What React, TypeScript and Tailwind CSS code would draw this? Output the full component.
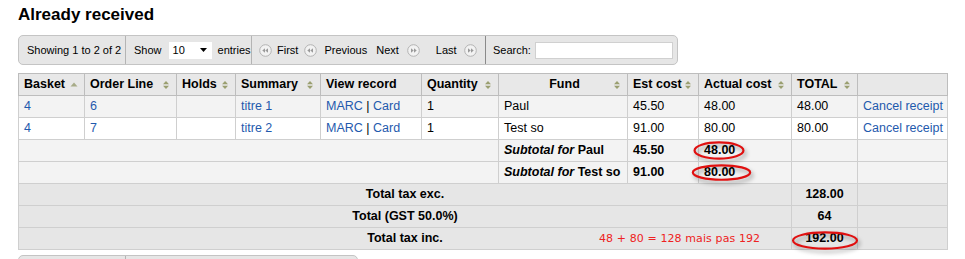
import React from "react";

const link = "text-[#1f5aad]";

function SortIcon({ up = false }: { up?: boolean }) {
  if (up) {
    return (
      <svg width="8" height="10" viewBox="0 0 8 10" className="absolute right-[6px] top-[6px]">
        <path d="M0.5 6.5 L4 2.5 L7.5 6.5 Z" fill="#a7ab88" />
      </svg>
    );
  }
  return (
    <svg width="8" height="10" viewBox="0 0 8 10" className="absolute right-[6px] top-[6px]">
      <path d="M1 4.3 L4 1 L7 4.3 Z" fill="#9a9f70" />
      <path d="M1 5.7 L4 9 L7 5.7 Z" fill="#9a9f70" />
    </svg>
  );
}

function PageIcon({ dir }: { dir: "prev" | "next" }) {
  return (
    <svg width="13" height="13" viewBox="0 0 13 13" className="block">
      <circle cx="6.5" cy="6.5" r="5.8" fill="#f2f2f2" stroke="#b3b3b3" strokeWidth="1" />
      {dir === "prev" ? (
        <g fill="#9a9a9a">
          <path d="M3.3 6.5 L6 4.2 L6 8.8 Z" />
          <path d="M6.3 6.5 L9 4.2 L9 8.8 Z" />
        </g>
      ) : (
        <g fill="#9a9a9a">
          <path d="M9.7 6.5 L7 4.2 L7 8.8 Z" />
          <path d="M6.7 6.5 L4 4.2 L4 8.8 Z" />
        </g>
      )}
    </svg>
  );
}

function Ellipse({ className }: { className: string }) {
  return (
    <svg
      className={"pointer-events-none absolute drop-shadow-[2px_3px_2px_rgba(0,0,0,0.35)] " + className}
      viewBox="0 0 100 40"
      preserveAspectRatio="none"
    >
      <ellipse cx="50" cy="20" rx="47" ry="17" fill="none" stroke="#e01010" strokeWidth="2.2" vectorEffect="non-scaling-stroke" />
    </svg>
  );
}

type Row = {
  basket: string;
  line: string;
  title: string;
  fund: string;
  est: string;
  actual: string;
  total: string;
};

const rows: Row[] = [
  { basket: "4", line: "6", title: "titre 1", fund: "Paul", est: "45.50", actual: "48.00", total: "48.00" },
  { basket: "4", line: "7", title: "titre 2", fund: "Test so", est: "91.00", actual: "80.00", total: "80.00" },
];

const th = "relative h-[22px] whitespace-nowrap border border-[#bdbdbd] pl-[5px] pr-[2px] py-0 text-left font-bold";
const td = "h-[22px] whitespace-nowrap border border-[#cfcfcf] px-[5px] py-0";

export default function App() {
  return (
    <div className="h-[259px] overflow-hidden bg-white pl-[18px] font-['Liberation_Sans',Arial,sans-serif] text-[12.5px] text-black">
      <h1 className="pt-[5px] text-[17px] font-bold leading-[20px]">Already received</h1>

      <div className="mt-[10px] flex h-[30px] w-[660px] items-center whitespace-nowrap rounded-[5px] border border-[#c4c4c4] bg-[#e6e6e6] text-[11px]">
        <div className="flex h-full w-[107px] items-center border-r border-[#b4b4b4] pl-[8px]">Showing 1 to 2 of 2</div>
        <div className="flex h-full w-[126px] items-center border-r border-[#b4b4b4] pl-[8px]">
          <span>Show</span>
          <div className="ml-[7px] flex h-[17px] w-[43px] items-center justify-between bg-white pl-[4px] pr-[5px]">
            <span>10</span>
            <svg width="7" height="4" viewBox="0 0 7 4">
              <path d="M0 0 L7 0 L3.5 4 Z" fill="#000" />
            </svg>
          </div>
          <span className="ml-[6px]">entries</span>
        </div>
        <div className="flex h-full w-[234px] items-center border-r border-[#8a8a8a] pl-[7px]">
          <PageIcon dir="prev" />
          <span className="ml-[5px]">First</span>
          <span className="ml-[6px]"><PageIcon dir="prev" /></span>
          <span className="ml-[7px]">Previous</span>
          <span className="ml-[9px]">Next</span>
          <span className="ml-[8px]"><PageIcon dir="next" /></span>
          <span className="ml-[16px]">Last</span>
          <span className="ml-[7px]"><PageIcon dir="next" /></span>
        </div>
        <div className="flex h-full flex-1 items-center pl-[7px]">
          <span>Search:</span>
          <div className="ml-[4px] h-[17px] w-[138px] border border-[#d0d0d0] bg-white" />
        </div>
      </div>

      <table className="mt-[8px] w-[929px] table-fixed border-collapse border border-[#bdbdbd]">
        <colgroup>
          <col className="w-[66px]" />
          <col className="w-[92px]" />
          <col className="w-[59px]" />
          <col className="w-[85px]" />
          <col className="w-[101px]" />
          <col className="w-[77px]" />
          <col className="w-[129px]" />
          <col className="w-[71px]" />
          <col className="w-[93px]" />
          <col className="w-[66px]" />
          <col className="w-[90px]" />
        </colgroup>
        <thead>
          <tr className="bg-[#e8e8e8] text-[12.5px]">
            <th className={th}>Basket<SortIcon up /></th>
            <th className={th}>Order Line<SortIcon /></th>
            <th className={th}>Holds<SortIcon /></th>
            <th className={th}>Summary<SortIcon /></th>
            <th className={th}>View record</th>
            <th className={th}>Quantity<SortIcon /></th>
            <th className={th + " !text-center"}>Fund<SortIcon /></th>
            <th className={th}>Est cost<SortIcon /></th>
            <th className={th}>Actual cost<SortIcon /></th>
            <th className={th}>TOTAL<SortIcon /></th>
            <th className={th}></th>
          </tr>
        </thead>
        <tbody>
          {rows.map((r, i) => (
            <tr key={r.line} className={i === 0 ? "bg-[#f3f3f3]" : "bg-white"}>
              <td className={td + " " + link}>{r.basket}</td>
              <td className={td + " " + link}>{r.line}</td>
              <td className={td}></td>
              <td className={td + " " + link}>{r.title}</td>
              <td className={td}>
                <span className={link}>MARC</span> | <span className={link}>Card</span>
              </td>
              <td className={td}>1</td>
              <td className={td}>{r.fund}</td>
              <td className={td}>{r.est}</td>
              <td className={td}>{r.actual}</td>
              <td className={td}>{r.total}</td>
              <td className={td + " overflow-hidden pr-0 " + link}>Cancel receipt</td>
            </tr>
          ))}

          {rows.map((r, i) => (
            <tr key={"sub" + r.line} className="bg-[#f3f3f3] font-bold">
              <td colSpan={6} className={td}></td>
              <td className={td}>
                <em>Subtotal for</em> {r.fund}
              </td>
              <td className={td}>{r.est}</td>
              <td className={td + " relative"}>
                {r.actual}
                {i === 0 ? (
                  <Ellipse className="left-[-6px] top-[1px] h-[19px] w-[52px]" />
                ) : (
                  <Ellipse className="left-[-8px] top-[2px] h-[17px] w-[61px]" />
                )}
              </td>
              <td className={td}></td>
              <td className={td}></td>
            </tr>
          ))}

          <tr className="bg-[#e6e6e6] font-bold">
            <td colSpan={9} className={td + " text-center"}>Total tax exc.</td>
            <td className={td + " text-center"}>128.00</td>
            <td className={td}></td>
          </tr>
          <tr className="bg-[#e6e6e6] font-bold">
            <td colSpan={9} className={td + " text-center"}>Total (GST 50.0%)</td>
            <td className={td + " text-center"}>64</td>
            <td className={td}></td>
          </tr>
          <tr className="bg-[#e6e6e6] font-bold">
            <td colSpan={9} className={td + " relative text-center"}>
              Total tax inc.
              <span className="absolute left-[580px] top-[3px] font-['DejaVu_Sans',Verdana,sans-serif] text-[11px] font-normal tracking-[0.1px] text-[#ee2222]">
                48 + 80 = 128 mais pas 192
              </span>
            </td>
            <td className={td + " relative text-center"}>
              192.00
              <Ellipse className="left-[-1px] top-[3px] h-[19px] w-[68px]" />
            </td>
            <td className={td}></td>
          </tr>
        </tbody>
      </table>

      <div className="mt-[5px] flex h-[30px] w-[340px] rounded-[5px] border border-[#c4c4c4] bg-[#e6e6e6] text-[12px]">
        <div className="h-full w-[107px] border-r border-[#b4b4b4]" />
        <div className="h-full flex-1" />
      </div>
    </div>
  );
}
